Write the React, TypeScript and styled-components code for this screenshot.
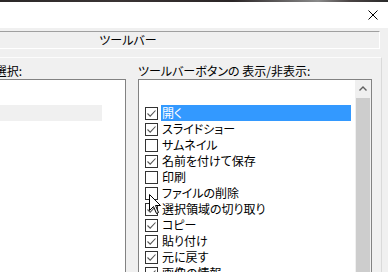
import React from "react";
import styled, { createGlobalStyle } from "styled-components";

const GlobalStyle = createGlobalStyle`
  html, body { margin: 0; padding: 0; background: #f0f0f0; }
  body {
    font-family: "Noto Sans CJK JP", "Noto Sans", sans-serif;
    font-size: 12px;
    color: #000;
    font-feature-settings: "palt";
  }
`;

const Screen = styled.div`
  position: relative;
  width: 388px;
  height: 272px;
  overflow: hidden;
  background: #f0f0f0;
`;

const DesktopStrip = styled.div`
  height: 2px;
  background: linear-gradient(90deg, #2b2828 0%, #3a3434 30%, #2a2526 60%, #8a8a8a 82%, #4a4444 90%, #2a2a2a 100%);
`;

const Window = styled.div`
  margin-left: -124px;
  width: 520px;
  background: #f0f0f0;
`;

const TitleBar = styled.div`
  height: 26px;
  background: #ffffff;
  display: flex;
  justify-content: flex-end;
`;

const CloseButton = styled.div`
  width: 46px;
  height: 26px;
  display: flex;
  align-items: center;
  justify-content: center;
`;

const Body = styled.div`
  padding-top: 3px;
`;

const TabStrip = styled.div`
  height: 16px;
  margin-right: 16px;
  border-top: 1px solid #a0a0a0;
  border-left: 1px solid #a0a0a0;
  border-bottom: 1px solid #ffffff;
  border-right: 1px solid #ffffff;
  background: #f0f0f0;
  display: flex;
  align-items: center;
  justify-content: center;
  line-height: 16px;
`;

const Panel = styled.div`
  margin: 8px 14px 0 8px;
  height: 230px;
  border-top: 1px solid #fcfcfc;
  border-right: 1px solid #dadada;
  padding: 5px 9px 0 0;
  display: grid;
  grid-template-columns: 1fr 234px;
  column-gap: 12px;
`;

const Column = styled.div`
  display: flex;
  flex-direction: column;
  min-width: 0;
`;

const Label = styled.div<{ $alignRight?: boolean }>`
  height: 16px;
  line-height: 16px;
  white-space: nowrap;
  text-align: ${(p) => (p.$alignRight ? "right" : "left")};
  padding-right: ${(p) => (p.$alignRight ? "104px" : "0")};
`;

const ListBox = styled.div`
  flex: 1;
  background: #ffffff;
  border: 1px solid #828282;
  display: flex;
  min-height: 0;
  overflow: hidden;
`;

const LeftList = styled.div`
  flex: 1;
  padding-top: 25px;
`;

const InactiveRow = styled.div`
  height: 16px;
  margin-right: 23px;
  background: #f0f0f0;
`;

const ItemList = styled.div`
  flex: 1;
  padding: 25px 4px 0 6px;
`;

const Row = styled.div`
  height: 16px;
  display: flex;
  align-items: center;
`;

const Check = styled.div`
  width: 11px;
  height: 11px;
  border: 1px solid #333333;
  background: #ffffff;
  flex: none;
  display: flex;
  align-items: center;
  justify-content: center;
  margin-right: 3px;
`;

const ItemLabel = styled.div<{ $selected?: boolean }>`
  flex: 1;
  height: 16px;
  line-height: 16px;
  padding-left: 1px;
  white-space: nowrap;
  background: ${(p) => (p.$selected ? "#3399ff" : "transparent")};
  color: ${(p) => (p.$selected ? "#ffffff" : "#000000")};
`;

const ScrollBar = styled.div`
  width: 16px;
  flex: none;
  background: #f0f0f0;
  display: flex;
  flex-direction: column;
  align-items: center;
`;

const ArrowButton = styled.div`
  height: 17px;
  width: 16px;
  display: flex;
  align-items: center;
  justify-content: center;
`;

const Thumb = styled.div`
  flex: 1;
  width: 14px;
  margin-top: 1px;
  background: #cdcdcd;
`;

const Cursor = styled.svg`
  position: absolute;
  left: 149px;
  top: 194px;
`;

const items: { label: string; checked: boolean; selected?: boolean }[] = [
  { label: "開く", checked: true, selected: true },
  { label: "スライドショー", checked: true },
  { label: "サムネイル", checked: false },
  { label: "名前を付けて保存", checked: true },
  { label: "印刷", checked: false },
  { label: "ファイルの削除", checked: false },
  { label: "選択領域の切り取り", checked: true },
  { label: "コピー", checked: true },
  { label: "貼り付け", checked: true },
  { label: "元に戻す", checked: true },
  { label: "画像の情報", checked: true },
];

export default function App() {
  return (
    <>
      <GlobalStyle />
      <Screen>
        <DesktopStrip />
        <Window>
          <TitleBar>
            <CloseButton>
              <svg width="10" height="10" viewBox="0 0 10 10">
                <path d="M0.5 0.5 L9.5 9.5 M9.5 0.5 L0.5 9.5" stroke="#000" strokeWidth="1" fill="none" />
              </svg>
            </CloseButton>
          </TitleBar>
          <Body>
            <TabStrip>ツールバー</TabStrip>
            <Panel>
              <Column>
                <Label $alignRight>ボタンを選択:</Label>
                <ListBox>
                  <LeftList>
                    <InactiveRow />
                  </LeftList>
                </ListBox>
              </Column>
              <Column>
                <Label>ツールバーボタンの 表示/非表示:</Label>
                <ListBox>
                  <ItemList>
                    {items.map((it) => (
                      <Row key={it.label}>
                        <Check>
                          {it.checked && (
                            <svg width="11" height="11" viewBox="0 0 11 11">
                              <path d="M1.5 5.5 L4.2 8.2 L9.5 2.5" stroke="#555" strokeWidth="1.1" fill="none" />
                            </svg>
                          )}
                        </Check>
                        <ItemLabel $selected={it.selected}>{it.label}</ItemLabel>
                      </Row>
                    ))}
                  </ItemList>
                  <ScrollBar>
                    <ArrowButton>
                      <svg width="8" height="5" viewBox="0 0 8 5">
                        <path d="M0.5 4.5 L4 1 L7.5 4.5" stroke="#606060" strokeWidth="1.4" fill="none" />
                      </svg>
                    </ArrowButton>
                    <Thumb />
                  </ScrollBar>
                </ListBox>
              </Column>
            </Panel>
          </Body>
        </Window>
        <Cursor width="13" height="21" viewBox="0 0 13 21">
          <path d="M0.5 0.5 L0.5 16.5 L4.5 12.5 L7.5 19.5 L9.5 18.5 L6.5 11.5 L11.5 11.5 Z" fill="#fff" stroke="#000" strokeWidth="1" strokeLinejoin="miter" />
        </Cursor>
      </Screen>
    </>
  );
}
